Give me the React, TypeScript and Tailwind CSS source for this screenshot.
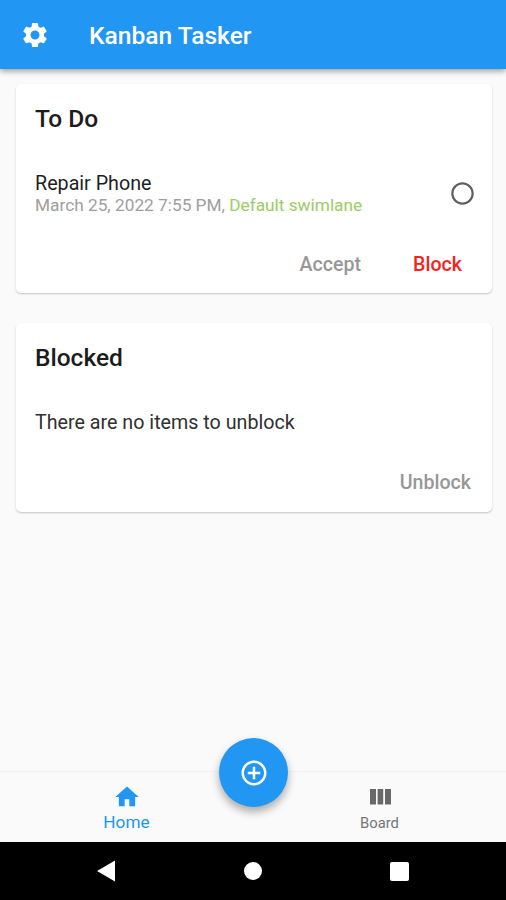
import React from "react";
import {
  MdAddCircleOutline,
  MdHome,
  MdRadioButtonUnchecked,
  MdSettings,
} from "react-icons/md";

interface CardProps {
  title: string;
  className: string;
  children: React.ReactNode;
}

const Card: React.FC<CardProps> = ({ title, className, children }) => (
  <section
    className={`flex flex-col rounded-[5px] bg-white pl-[19px] pt-[21px] shadow-[0_1px_2px_rgba(0,0,0,0.22)] ${className}`}
  >
    <h2 className="text-[24.5px] font-medium leading-7 text-[#1c1c1c]">{title}</h2>
    {children}
  </section>
);

export default function App() {
  return (
    <div className="flex h-[900px] w-[506px] flex-col overflow-hidden bg-[#fafafa] font-['Roboto',sans-serif] whitespace-nowrap">
      {/* App bar */}
      <header className="z-10 flex h-[69px] shrink-0 items-center bg-[#2196f3] pl-5 pt-px text-white shadow-[0_2px_6px_rgba(0,0,0,0.4)]">
        <MdSettings className="size-[30px]" />
        <h1 className="mt-px ml-[39px] text-[24.6px] font-medium leading-7">Kanban Tasker</h1>
      </header>

      {/* Cards */}
      <main className="flex flex-1 flex-col gap-[30px] pl-4 pr-[14px] pt-[15px]">
        <Card title="To Do" className="h-[209px]">
          <div className="mt-[39px] flex items-center justify-between pr-4">
            <div>
              <p className="text-[19.7px] leading-6 text-[#1f1f1f]">Repair Phone</p>
              <p className="-mt-px text-[17.25px] leading-5 text-[#9e9e9e]">
                March 25, 2022 7:55 PM, <span className="text-[#9ccc65]">Default swimlane</span>
              </p>
            </div>
            <MdRadioButtonUnchecked className="size-[27px] text-[#5f5f5f]" />
          </div>
          <div className="mt-[38px] flex justify-end gap-[52px] pr-[30px] text-[19.6px] font-medium leading-6">
            <button className="text-[#979797]">Accept</button>
            <button className="text-[#f8221b]">Block</button>
          </div>
        </Card>

        <Card title="Blocked" className="h-[189px]">
          <p className="mt-[39px] text-[19.7px] leading-6 text-[#303030]">There are no items to unblock</p>
          <div className="mt-9 flex justify-end pr-[21px] text-[19.6px] font-medium leading-6">
            <button className="text-[#979797]">Unblock</button>
          </div>
        </Card>
      </main>

      {/* Bottom tabs */}
      <nav className="relative grid h-[71px] shrink-0 grid-cols-2 border-t border-[#f1f1f1]">
        <a className="flex flex-col items-center pt-[11px] text-[#2196f3]">
          <MdHome className="size-7" />
          <span className="-mt-px text-[17.2px] leading-6">Home</span>
        </a>
        <a className="flex flex-col items-center pt-[11px] text-[#757575]">
          <svg className="h-7 w-[22px]" viewBox="0 0 22 28" fill="#696969">
            <path d="M1 6h6v15.5H1zM8.6 6h5.6v15.5H8.6zM16 6h6v15.5h-6z" />
          </svg>
          <span className="text-[14.8px] leading-6">Board</span>
        </a>
        <button className="absolute -top-[34px] left-[219px] flex size-[69px] items-center justify-center rounded-full bg-[#2196f3] text-white shadow-[0_5px_8px_rgba(0,0,0,0.32)]">
          <MdAddCircleOutline className="size-[30px]" />
        </button>
      </nav>

      {/* System navigation */}
      <footer className="flex h-[58px] shrink-0 items-center justify-between bg-black pl-[97px] pr-[97px]">
        <svg className="h-[22px] w-[19px]" viewBox="0 0 19 22" fill="white">
          <path d="M0 11L18 0.5V21.5Z" />
        </svg>
        <div className="size-[18px] rounded-full bg-white" />
        <div className="size-[19px] rounded-[2px] bg-white" />
      </footer>
    </div>
  );
}
